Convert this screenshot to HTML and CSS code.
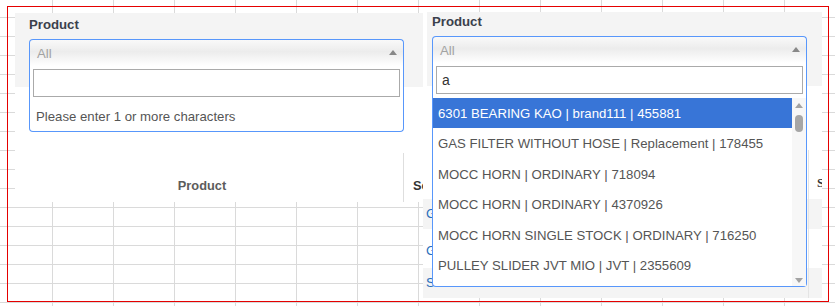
FILE: index.html
```html
<!DOCTYPE html>
<html>

<head>
    <link rel="stylesheet" href="styles.css">
</head>

<body>
    <div class="frame">

        <!-- first capture: empty search -->
        <div class="shot shot-left">
            <div class="panel">
                <div class="label">Product</div>
                <div class="select">
                    <div class="choice"><span class="placeholder">All</span><span class="arrow"></span></div>
                    <div class="drop">
                        <div class="search"><input type="text" value=""></div>
                        <div class="message">Please enter 1 or more characters</div>
                    </div>
                </div>
            </div>
            <div class="thead">
                <div class="th th-product">Product</div>
                <div class="th th-next">Sc</div>
            </div>
        </div>

        <!-- second capture: typed "a" -->
        <div class="shot shot-right">
            <div class="panel">
                <div class="label">Product</div>
                <div class="select">
                    <div class="choice"><span class="placeholder">All</span><span class="arrow"></span></div>
                    <div class="drop">
                        <div class="search"><input type="text" value="a"></div>
                        <div class="results">
                            <ul class="list">
                                <li class="active">6301 BEARING KAO | brand111 | 455881</li>
                                <li>GAS FILTER WITHOUT HOSE | Replacement | 178455</li>
                                <li>MOCC HORN | ORDINARY | 718094</li>
                                <li>MOCC HORN | ORDINARY | 4370926</li>
                                <li>MOCC HORN SINGLE STOCK | ORDINARY | 716250</li>
                                <li>PULLEY SLIDER JVT MIO | JVT | 2355609</li>
                            </ul>
                            <div class="scrollbar">
                                <span class="sb-up"></span>
                                <span class="sb-thumb"></span>
                                <span class="sb-down"></span>
                            </div>
                        </div>
                    </div>
                </div>
            </div>
            <div class="rtable">
                <div class="rrow rhead">
                    <div class="rcell"></div>
                    <div class="rcell rcell-end">S</div>
                </div>
                <div class="rrow striped">
                    <div class="rcell"><a class="link">G</a></div>
                    <div class="rcell rcell-end"></div>
                </div>
                <div class="rrow tall">
                    <div class="rcell"><a class="link">G</a></div>
                    <div class="rcell rcell-end"></div>
                </div>
                <div class="rrow striped">
                    <div class="rcell"><a class="link">S</a></div>
                    <div class="rcell rcell-end"></div>
                </div>
            </div>
        </div>

    </div>
</body>

</html>
```

FILE: styles.css
```css
* {
    box-sizing: border-box;
}

html,
body {
    height: 100%;
}

body {
    margin: 0;
    font-family: "Liberation Sans", Arial, sans-serif;
    font-size: 13.2px;
    background-color: #fff;
    /* spreadsheet grid behind the captures */
    background-image:
        linear-gradient(to right, #dadada 1px, transparent 1px),
        linear-gradient(to bottom, #dadada 1px, transparent 1px);
    background-size: 61px 19px;
    background-position: 52px 17px;
}

.frame {
    display: flex;
    align-items: flex-start;
    margin: 6px 0 0 7px;
    width: 822px;
    height: 296px;
    padding-left: 7px;
    border: 1px solid #e50000;
}

.shot {
    flex: none;
    background: #fff;
    overflow: hidden;
}

.shot-left {
    width: 408px;
    height: 189px;
    margin-top: 6px;
}

.shot-right {
    width: 399px;
    height: 286px;
    margin-top: 5px;
}

.panel {
    height: 74px;
    background: #f4f4f4;
}

.shot-left .panel {
    padding: 4px 14px 0;
}

.shot-right .panel {
    margin-left: 4px;
    padding: 2px 5px 0;
}

.label {
    font-weight: bold;
    line-height: 16px;
    color: #3b414c;
    margin-bottom: 6px;
}

/* select2 style box */
.select {
    position: relative;
    width: 375px;
}

.choice {
    display: flex;
    align-items: center;
    justify-content: space-between;
    height: 27px;
    padding: 2px 6px 0 7px;
    border: 1px solid #5897fb;
    border-bottom: none;
    border-radius: 4px 4px 0 0;
    background: linear-gradient(to bottom, #f9f9f9 0%, #ececec 45%, #fff 100%);
}

.placeholder {
    color: #a2a2a2;
    line-height: 24px;
}

.arrow {
    width: 0;
    height: 0;
    margin-bottom: 4px;
    border-left: 4px solid transparent;
    border-right: 4px solid transparent;
    border-bottom: 5px solid #888;
}

.drop {
    position: absolute;
    top: 27px;
    left: 0;
    right: 0;
    z-index: 2;
    background: #fff;
    border: 1px solid #5897fb;
    border-top: none;
    border-radius: 0 0 4px 4px;
}

.search {
    padding: 3px 3px 0;
}

.search input {
    display: block;
    width: 100%;
    height: 28px;
    margin: 0;
    padding: 0 5px;
    border: 1px solid #aaa;
    outline: none;
    font-family: "Liberation Sans", Arial, sans-serif;
    font-size: 14px;
    color: #333;
}

.message {
    margin-top: 4px;
    padding: 6px 6px 4px;
    line-height: 20px;
    color: #555;
}

.results {
    display: flex;
    height: 188px;
    margin-top: 4px;
    overflow: hidden;
}

.list {
    flex: 1;
    margin: 0;
    padding: 0;
    list-style: none;
}

.list li {
    height: 30.4px;
    padding-left: 5px;
    line-height: 31px;
    color: #555;
    white-space: nowrap;
}

.list li.active {
    background: #3875d7;
    color: #fff;
}

.scrollbar {
    display: flex;
    flex-direction: column;
    align-items: center;
    width: 14px;
    padding: 5px 0 3px;
    background: #f7f7f7;
}

.sb-up,
.sb-down {
    width: 0;
    height: 0;
    border-left: 4px solid transparent;
    border-right: 4px solid transparent;
}

.sb-up {
    border-bottom: 5px solid #a3a3a3;
}

.sb-down {
    margin-top: auto;
    border-top: 5px solid #a3a3a3;
}

.sb-thumb {
    width: 8px;
    height: 17px;
    margin-top: 7px;
    border-radius: 4px;
    background: #a6a6a6;
}

/* table heads under the boxes */
.thead {
    display: flex;
    height: 49px;
    margin-top: 66px;
}

.th {
    flex: none;
    padding-top: 25px;
    line-height: 16px;
    font-size: 12.8px;
    font-weight: bold;
    white-space: nowrap;
}

.th-product {
    width: 389px;
    padding-right: 14px;
    text-align: center;
    color: #5c5c5c;
    border-right: 1px solid #dedede;
}

.th-next {
    padding-left: 9px;
    color: #333;
}

.rtable {
    margin-top: 64px;
}

.rrow {
    display: flex;
    height: 30px;
    line-height: 30px;
}

.rhead {
    height: 49px;
    line-height: 16px;
}

.rhead .rcell-end {
    padding: 25px 0 0 8px;
    font-family: "Liberation Serif", serif;
    font-weight: bold;
    font-size: 13px;
    color: #333;
    overflow: hidden;
}

.rrow.tall {
    height: 39px;
    line-height: 44px;
}

.rrow.striped {
    background: #f4f4f4;
}

.rcell {
    flex: 1;
    padding-left: 3px;
}

.rcell-end {
    flex: none;
    width: 14px;
    padding-left: 0;
    border-left: 1px solid #e4e4e4;
}

.link {
    color: #2a6ebb;
}
```
